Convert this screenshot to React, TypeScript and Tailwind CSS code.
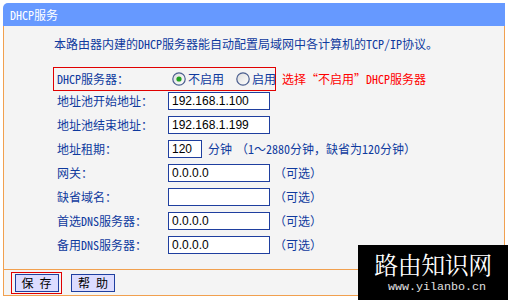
import React from "react";

const F = "font-['Noto_Sans_Mono_CJK_SC','Noto_Sans_CJK_SC',sans-serif]";

function Radio({ checked }: { checked: boolean }) {
  return (
    <svg width="14" height="14" viewBox="0 0 14 14" className="shrink-0">
      <defs>
        <linearGradient id={checked ? "rg1" : "rg2"} x1="0" y1="0" x2="1" y2="1">
          <stop offset="0" stopColor="#dcdcdc" />
          <stop offset="1" stopColor="#ffffff" />
        </linearGradient>
      </defs>
      <circle cx="7" cy="7" r="6.2" fill={`url(#${checked ? "rg1" : "rg2"})`} stroke="#4b5f8f" strokeWidth="1.2" />
      {checked && <circle cx="7" cy="7" r="2.6" fill="#21a121" />}
    </svg>
  );
}

function Input({ value, w }: { value: string; w: string }) {
  return (
    <div
      className={`${w} h-[18px] border border-[#1f3f9f] bg-white flex items-center pl-[3px] text-[12px] text-black font-['Liberation_Sans',sans-serif] shrink-0`}
    >
      {value}
    </div>
  );
}

function Row({ label, children }: { label: string; children: React.ReactNode }) {
  return (
    <div className="flex items-center h-[24px] pl-[53px]">
      <div className="w-[111px] shrink-0 whitespace-nowrap">{label}</div>
      {children}
    </div>
  );
}

const Opt = () => <span className="ml-[4px] whitespace-nowrap">（可选）</span>;

export default function App() {
  return (
    <div className={`relative w-[508px] h-[300px] bg-white overflow-hidden ${F} text-[12px] leading-[14px] text-[#0f3a9e]`}>
      <div className="ml-[3px] mt-[3px] w-[502px]">
        <div className="h-[23px] bg-[#6699ff] rounded-tl-[5px] flex items-center pl-[7px] text-white">DHCP服务</div>
        <div className="h-[243px] bg-[#f4f4f4] border-l border-r border-[#f1a04f]">
          <div className="h-[36px] flex items-center pl-[50px] whitespace-nowrap">
            本路由器内建的DHCP服务器能自动配置局域网中各计算机的TCP/IP协议。
          </div>
          <div className="mt-[5px] flex items-center">
            <div className="ml-[49px] w-[223px] h-[24px] shrink-0 border border-[#e00000] flex items-center pl-[3px] whitespace-nowrap">
              <div className="w-[111px] shrink-0">DHCP服务器：</div>
              <div className="ml-[4px] flex items-center shrink-0">
                <Radio checked />
                <span className="ml-[2px]">不启用</span>
              </div>
              <div className="ml-[12px] flex items-center shrink-0">
                <Radio checked={false} />
                <span className="ml-[2px]">启用</span>
              </div>
            </div>
            <span className="ml-[6px] text-[#ff0000] whitespace-nowrap">选择“不启用”DHCP服务器</span>
          </div>
          <div className="mt-[-2px]">
            <Row label="地址池开始地址：">
              <Input value="192.168.1.100" w="w-[102px]" />
            </Row>
            <Row label="地址池结束地址：">
              <Input value="192.168.1.199" w="w-[102px]" />
            </Row>
            <Row label="地址租期：">
              <Input value="120" w="w-[34px]" />
              <span className="ml-[6px] whitespace-nowrap">分钟</span>
              <span className="ml-[4px] whitespace-nowrap">（1～2880分钟，缺省为120分钟）</span>
            </Row>
            <Row label="网关：">
              <Input value="0.0.0.0" w="w-[102px]" />
              <Opt />
            </Row>
            <Row label="缺省域名：">
              <Input value="" w="w-[102px]" />
              <Opt />
            </Row>
            <Row label="首选DNS服务器：">
              <Input value="0.0.0.0" w="w-[102px]" />
              <Opt />
            </Row>
            <Row label="备用DNS服务器：">
              <Input value="0.0.0.0" w="w-[102px]" />
              <Opt />
            </Row>
          </div>
        </div>
        <div className="h-[27px] bg-[#f4f4f4] border border-[#f1a04f] flex items-center">
          <div className="ml-[7px] w-[51px] h-[22px] border border-[#e00000] flex items-center justify-center">
            <div className="w-[44px] h-[18px] border border-[#1f3f9f] bg-[#dcdcff] flex items-center justify-center text-black">保 存</div>
          </div>
          <div className="ml-[9px] w-[44px] h-[18px] border border-[#1f3f9f] bg-[#dcdcff] flex items-center justify-center text-black">帮 助</div>
        </div>
      </div>
      <div className="absolute left-[358px] top-[245px] w-[150px] h-[55px] bg-black flex flex-col items-center">
        <div className="mt-[5px] text-[24px] leading-[28px] text-white font-['Noto_Serif_CJK_SC','Noto_Sans_CJK_SC',serif] tracking-[-0.5px]">路由知识网</div>
        <div className="mt-[2px] text-[11.7px] leading-[14px] text-[#e0e0e0] font-['Liberation_Mono',monospace] ml-[8px]">www.yilanbo.cn</div>
      </div>
    </div>
  );
}
